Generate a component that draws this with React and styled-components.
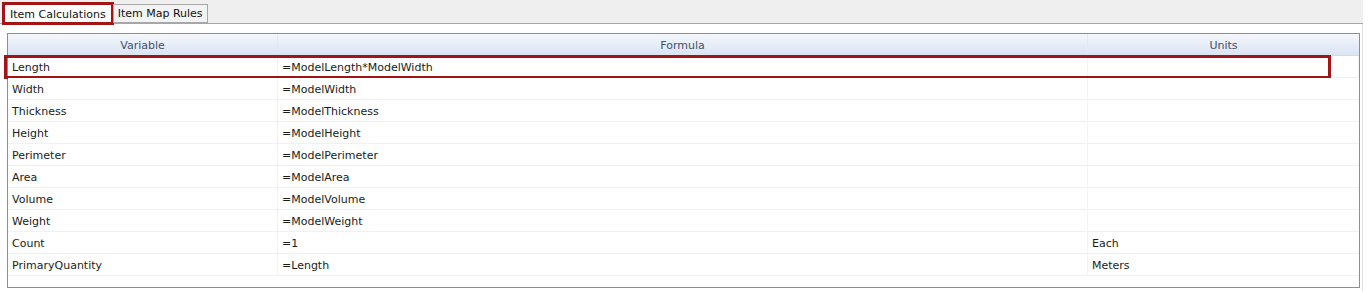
import styled, { createGlobalStyle } from 'styled-components';

const GlobalStyle = createGlobalStyle`
  body {
    margin: 0;
    background: #ffffff;
    font-family: Tahoma, "DejaVu Sans", "Liberation Sans", sans-serif;
  }
`;

const Page = styled.div`
  width: 1369px;
  height: 292px;
  background: #ffffff;
  overflow: hidden;
`;

const TabStrip = styled.div`
  display: flex;
  align-items: flex-end;
  height: 24px;
  width: 1363px;
  box-sizing: border-box;
  padding-left: 3px;
  background: #efefef;
  border-bottom: 1px solid #a7a7a7;
`;

const Tab = styled.div`
  display: flex;
  align-items: center;
  box-sizing: border-box;
  height: ${p => (p.$active ? '21px' : '19px')};
  padding: 0 ${p => (p.$active ? '6px' : '4px')};
  margin-bottom: ${p => (p.$active ? '-1px' : '0')};
  font-size: 11px;
  color: #111;
  background: ${p => (p.$active ? '#ffffff' : '#f3f3f3')};
  border: 1px solid #a7a7a7;
  border-bottom: ${p => (p.$active ? 'none' : '1px solid #a7a7a7')};
  outline: ${p => (p.$active ? '3px solid #a31515' : 'none')};
  outline-offset: -2px;
`;

const Panel = styled.div`
  width: 1363px;
  height: 267px;
  box-sizing: border-box;
  padding: 9px 2px 0 7px;
  border-right: 1px solid #e2e2e2;
`;

const Grid = styled.div`
  width: 1353px;
  height: 255px;
  box-sizing: border-box;
  border: 1px solid #8e8e8e;
  font-size: 11px;
  color: #1b1b1b;
`;

const Row = styled.div`
  position: relative;
  display: grid;
  grid-template-columns: 270px 810px 1fr;
  height: 21px;
  background: ${p =>
    p.$header ? 'linear-gradient(#f4f7fc, #dae4f2)' : '#ffffff'};
  border-bottom: 1px solid ${p => (p.$header ? '#d3dbe7' : '#f1f1f1')};
`;

const Cell = styled.div`
  display: flex;
  align-items: center;
  justify-content: ${p => (p.$header ? 'center' : 'flex-start')};
  padding-left: ${p => (p.$header ? '0' : '4px')};
  padding-top: 1px;
  color: ${p => (p.$header ? '#3f4f6e' : '#1b1b1b')};
  border-right: 1px solid ${p => (p.$header ? '#e4e9f1' : '#f4f4f4')};
  white-space: nowrap;
  overflow: hidden;
  &:last-child {
    border-right: none;
  }
`;

// annotation frame laid over the selected row
const Highlight = styled.div`
  position: absolute;
  left: -4px;
  top: -1px;
  width: 1327px;
  height: 24px;
  box-sizing: border-box;
  border: 3px solid #a31515;
  pointer-events: none;
`;

const rows = [
  ['Length', '=ModelLength*ModelWidth', ''],
  ['Width', '=ModelWidth', ''],
  ['Thickness', '=ModelThickness', ''],
  ['Height', '=ModelHeight', ''],
  ['Perimeter', '=ModelPerimeter', ''],
  ['Area', '=ModelArea', ''],
  ['Volume', '=ModelVolume', ''],
  ['Weight', '=ModelWeight', ''],
  ['Count', '=1', 'Each'],
  ['PrimaryQuantity', '=Length', 'Meters'],
];

const App = () => (
  <Page>
    <GlobalStyle />
    <TabStrip>
      <Tab $active>Item Calculations</Tab>
      <Tab>Item Map Rules</Tab>
    </TabStrip>
    <Panel>
      <Grid>
        <Row $header>
          <Cell $header>Variable</Cell>
          <Cell $header>Formula</Cell>
          <Cell $header>Units</Cell>
        </Row>
        {rows.map(([name, formula, units], i) => (
          <Row key={name}>
            <Cell>{name}</Cell>
            <Cell>{formula}</Cell>
            <Cell>{units}</Cell>
            {i === 0 && <Highlight />}
          </Row>
        ))}
      </Grid>
    </Panel>
  </Page>
);

export default App;
